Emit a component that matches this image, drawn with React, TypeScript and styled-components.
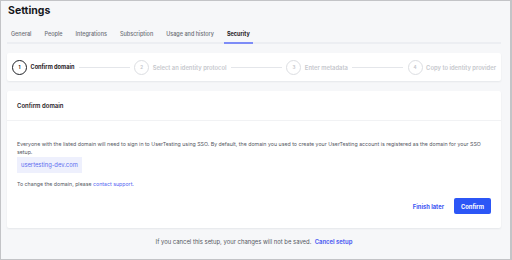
import React from 'react';
import styled, { createGlobalStyle } from 'styled-components';

const GlobalStyle = createGlobalStyle`
  body {
    margin: 0;
    font-family: Inter, "Noto Sans", sans-serif;
    color: #1f2126;
  }
`;

const Frame = styled.div`
  width: 512px;
  height: 260px;
  box-sizing: border-box;
  border: 1px solid #c3c4c7;
  border-right-width: 2px;
  background: #f6f7f9;
  padding: 0 9px 0 6px;
  display: flex;
  flex-direction: column;
  overflow: hidden;
`;

const Title = styled.h1`
  margin: 3px 0 0 1px;
  font-size: 10.5px;
  line-height: 14px;
  font-weight: 700;
  color: #16171c;
`;

const TabRow = styled.div`
  margin-top: 12px;
  display: flex;
  gap: 7px;
  padding-left: 1px;
  box-shadow: inset 0 -2px 0 #eceef2;
`;

const Tab = styled.div<{ $active?: boolean }>`
  padding: 0 3px 4px;
  font-size: 5.5px;
  line-height: 8px;
  font-weight: ${p => (p.$active ? 700 : 500)};
  color: ${p => (p.$active ? '#1f2126' : '#6c6f77')};
  border-bottom: 2px solid ${p => (p.$active ? '#7d8cf7' : 'transparent')};
`;

const Card = styled.div`
  background: #ffffff;
  border-radius: 2px;
  box-shadow: 0 1px 2px rgba(20, 25, 40, 0.07);
`;

const Stepper = styled(Card)`
  margin-top: 9px;
  height: 28px;
  box-sizing: border-box;
  padding: 0 5px;
  display: flex;
  align-items: center;
  gap: 4.5px;
`;

const Step = styled.div`
  display: flex;
  align-items: center;
  gap: 3.5px;
  flex-shrink: 0;
`;

const StepCircle = styled.div<{ $active?: boolean }>`
  width: 15px;
  height: 15px;
  box-sizing: border-box;
  border-radius: 50%;
  border: 1px solid ${p => (p.$active ? '#1f2126' : '#dcdee2')};
  color: ${p => (p.$active ? '#1f2126' : '#c6c8cd')};
  font-size: 4.5px;
  font-weight: 700;
  display: flex;
  align-items: center;
  justify-content: center;
`;

const StepLabel = styled.span<{ $active?: boolean }>`
  font-size: ${p => (p.$active ? '5.6px' : '5.85px')};
  font-weight: ${p => (p.$active ? 700 : 600)};
  color: ${p => (p.$active ? '#1f2126' : '#c6c8cd')};
  white-space: nowrap;
`;

const StepLine = styled.div`
  flex: 1;
  height: 1px;
  background: #e4e6ea;
`;

const Panel = styled(Card)`
  margin-top: 10px;
  height: 137px;
  display: flex;
  flex-direction: column;
`;

const PanelHeader = styled.div`
  height: 29px;
  line-height: 29px;
  padding: 0 10px;
  font-size: 6px;
  font-weight: 600;
  border-bottom: 1px solid #f1f2f4;
`;

const PanelBody = styled.div`
  flex: 1;
  padding: 19px 10px 14px;
  display: flex;
  flex-direction: column;
  align-items: flex-start;
`;

const Text = styled.p`
  margin: 0;
  font-size: 5.25px;
  line-height: 8px;
  color: #55585f;
`;

const DomainChip = styled.div`
  margin-top: 1px;
  height: 16px;
  line-height: 16px;
  padding: 0 4px;
  background: #eef0fd;
  color: #5b6cf0;
  font-size: 5.8px;
`;

const Hint = styled(Text)`
  margin-top: 7px;
`;

const Link = styled.a<{ $bold?: boolean }>`
  color: #5566f2;
  font-weight: ${p => (p.$bold ? 700 : 400)};
  text-decoration: none;
`;

const Actions = styled.div`
  margin-top: auto;
  align-self: stretch;
  display: flex;
  justify-content: flex-end;
  align-items: center;
  gap: 10px;
`;

const TextButton = styled.button`
  border: none;
  background: none;
  padding: 0;
  font-family: inherit;
  font-size: 5.8px;
  font-weight: 700;
  color: #3e56f3;
`;

const PrimaryButton = styled.button`
  width: 37px;
  height: 16px;
  border: none;
  border-radius: 2px;
  background: #2c56f6;
  color: #ffffff;
  font-family: inherit;
  font-size: 5.8px;
  font-weight: 700;
  padding: 0;
`;

const Footer = styled.div`
  margin-top: 10px;
  text-align: center;
  font-size: 5.9px;
  line-height: 8px;
  color: #55585f;
`;

const tabs = ['General', 'People', 'Integrations', 'Subscription', 'Usage and history', 'Security'];
const steps = ['Confirm domain', 'Select an identity protocol', 'Enter metadata', 'Copy to identity provider'];

export default function App() {
  return (
    <>
      <GlobalStyle />
      <Frame>
        <Title>Settings</Title>
        <TabRow>
          {tabs.map(t => (
            <Tab key={t} $active={t === 'Security'}>{t}</Tab>
          ))}
        </TabRow>
        <Stepper>
          {steps.map((s, i) => (
            <React.Fragment key={s}>
              {i > 0 && <StepLine />}
              <Step>
                <StepCircle $active={i === 0}>{i + 1}</StepCircle>
                <StepLabel $active={i === 0}>{s}</StepLabel>
              </Step>
            </React.Fragment>
          ))}
        </Stepper>
        <Panel>
          <PanelHeader>Confirm domain</PanelHeader>
          <PanelBody>
            <Text>
              Everyone with the listed domain will need to sign in to UserTesting using SSO. By default, the domain you used to create your UserTesting account is registered as the domain for your SSO setup.
            </Text>
            <DomainChip>usertesting-dev.com</DomainChip>
            <Hint>
              To change the domain, please <Link href="#">contact support.</Link>
            </Hint>
            <Actions>
              <TextButton>Finish later</TextButton>
              <PrimaryButton>Confirm</PrimaryButton>
            </Actions>
          </PanelBody>
        </Panel>
        <Footer>
          If you cancel this setup, your changes will not be saved.&nbsp;&nbsp;
          <Link href="#" $bold>Cancel setup</Link>
        </Footer>
      </Frame>
    </>
  );
}
